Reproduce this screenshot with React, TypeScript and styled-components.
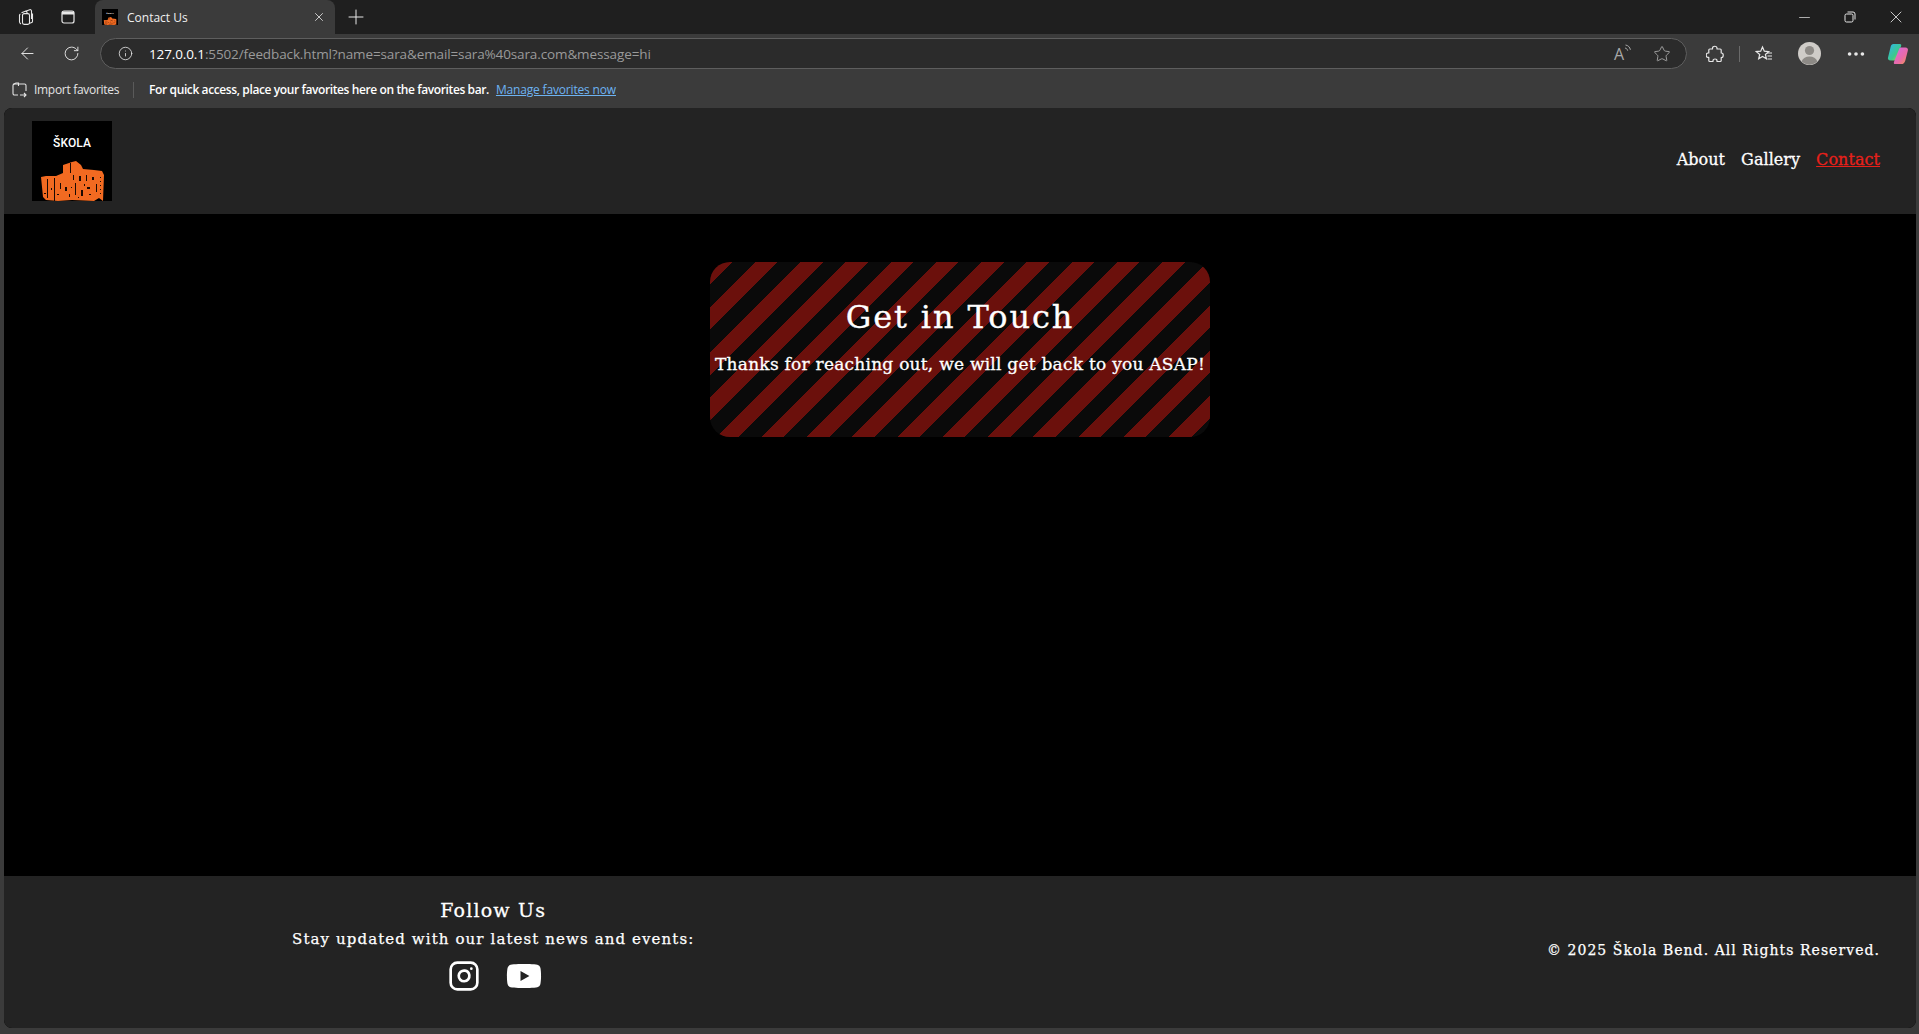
import React from "react";
import styled, { createGlobalStyle } from "styled-components";
import { ArrowLeft, RotateCw, Info, Plus, X, Minus, Star, MoreHorizontal, Instagram } from "lucide-react";
import { FaYoutube } from "react-icons/fa";

const Global = createGlobalStyle`
  html, body { margin: 0; padding: 0; background: #3b3b3b; }
  body { width: 1919px; height: 1034px; overflow: hidden; font-family: "Open Sans", "Noto Sans", sans-serif; }
  * { box-sizing: border-box; }
`;

const typewriter = `"DejaVu Serif", "Liberation Mono", serif`;

const Window = styled.div`
  width: 1919px;
  height: 1034px;
  display: flex;
  flex-direction: column;
  background: #3b3b3b;
`;
const TabStrip = styled.div`
  height: 34px;
  background: #1f1f1f;
  display: flex;
  align-items: center;
  color: #e8e8e8;
`;
const StripIcons = styled.div`
  width: 95px;
  display: flex;
  align-items: center;
  padding-left: 17px;
  gap: 25px;
`;
const Tab = styled.div`
  width: 240px;
  height: 34px;
  background: #3b3b3b;
  border-radius: 8px 8px 0 0;
  display: flex;
  align-items: center;
  padding: 0 9px 0 7px;
  gap: 9px;
`;
const TabTitle = styled.span`
  flex: 1;
  font-size: 12px;
  color: #f0f0f0;
`;
const NewTab = styled.div`
  width: 34px;
  margin-left: 4px;
  display: flex;
  justify-content: center;
`;
const WindowButtons = styled.div`
  margin-left: auto;
  display: flex;
  align-items: center;
`;
const WindowButton = styled.div`
  width: 46px;
  display: flex;
  justify-content: center;
`;
const Toolbar = styled.div`
  height: 38px;
  display: flex;
  align-items: center;
  padding: 1px 0 0 18px;
  color: #e8e8e8;
`;
const NavButtons = styled.div`
  width: 82px;
  display: flex;
  align-items: center;
  gap: 26px;
`;
const Omnibox = styled.div`
  width: 1587px;
  height: 31px;
  border: 1px solid #5e5e5e;
  background: #2b2b2b;
  border-radius: 16px;
  display: flex;
  align-items: center;
  padding: 0 15px 0 17px;
`;
const Url = styled.div`
  margin-left: 16px;
  flex: 1;
  font-size: 13.5px;
  letter-spacing: -0.12px;
  color: #9a9a9a;
  white-space: nowrap;
`;
const Host = styled.span`
  color: #ffffff;
`;
const OmniActions = styled.div`
  display: flex;
  align-items: center;
  gap: 21px;
  color: #a8a8a8;
`;
const ReadAloudBox = styled.div`
  display: flex;
  align-items: flex-start;
`;
const ReadAloudLetter = styled.span`
  font-size: 16px;
  line-height: 20px;
  margin-top: 1px;
`;
const ToolIcons = styled.div`
  flex: 1;
  display: flex;
  align-items: center;
  padding-left: 19px;
`;
const ToolDivider = styled.div`
  width: 1px;
  height: 16px;
  background: #6a6a6a;
  margin: 0 15px;
`;
const Avatar = styled.div`
  margin-left: 25px;
  display: flex;
`;
const More = styled.div`
  margin-left: 24px;
  display: flex;
`;
const Copilot = styled.div`
  margin-left: 20px;
  display: flex;
`;
const FavBar = styled.div`
  height: 36px;
  display: flex;
  align-items: center;
  padding: 0 0 1px 11px;
  font-size: 12px;
  color: #e4e4e4;
`;
const FavImport = styled.div`
  display: flex;
  align-items: center;
  gap: 6px;
  letter-spacing: -0.3px;
`;
const FavDivider = styled.div`
  width: 1px;
  height: 16px;
  background: #5a5a5a;
  margin: 0 15px 0 14px;
`;
const FavText = styled.span`
  color: #ffffff;
  font-weight: 600;
  letter-spacing: -0.39px;
`;
const FavLink = styled.a`
  margin-left: 7px;
  color: #6db3f2;
  text-decoration: underline;
  letter-spacing: -0.17px;
`;
const Page = styled.div`
  width: 1912px;
  height: 920px;
  margin-left: 4px;
  border-radius: 8px;
  overflow: hidden;
  display: flex;
  flex-direction: column;
  background: #000;
  font-family: ${typewriter};
  color: #fff;
`;
const Header = styled.header`
  height: 106px;
  flex: none;
  background: #232323;
  display: flex;
  align-items: center;
  justify-content: space-between;
  padding: 0 36px 0 28px;
`;
const Nav = styled.nav`
  display: flex;
  gap: 16px;
  margin-top: -3px;
`;
const NavLink = styled.a<{ $active?: boolean }>`
  font-size: 16px;
  letter-spacing: 0.05px;
  -webkit-text-stroke: 0.3px currentColor;
  color: ${(p) => (p.$active ? "#e8201a" : "#ffffff")};
  text-decoration: ${(p) => (p.$active ? "underline" : "none")};
`;
const Main = styled.main`
  flex: 1;
  display: flex;
  flex-direction: column;
  align-items: center;
  padding-top: 48px;
`;
const Card = styled.section`
  width: 500px;
  height: 175px;
  border-radius: 20px;
  background: repeating-linear-gradient(135deg, #6b100c 0 16px, #0a0a0a 16px 32px);
  display: flex;
  flex-direction: column;
  align-items: center;
  padding-top: 35px;
`;
const Title = styled.h1`
  margin: 0;
  font-size: 32px;
  line-height: 40px;
  font-weight: 400;
  letter-spacing: 1.9px;
  -webkit-text-stroke: 0.3px #fff;
`;
const Message = styled.p`
  margin: 15px 0 0;
  font-size: 17px;
  line-height: 24px;
  font-weight: 400;
  letter-spacing: 0.24px;
  -webkit-text-stroke: 0.3px #fff;
  white-space: nowrap;
`;
const Footer = styled.footer`
  height: 152px;
  flex: none;
  background: #232323;
  display: flex;
  align-items: center;
  justify-content: space-between;
  padding: 0 36px 0 288px;
`;
const FollowCol = styled.div`
  display: flex;
  flex-direction: column;
  align-items: center;
  margin-top: -13px;
`;
const FollowTitle = styled.h3`
  margin: 0;
  font-size: 19px;
  line-height: 24px;
  font-weight: 400;
  letter-spacing: 1.2px;
  -webkit-text-stroke: 0.3px #fff;
`;
const FollowText = styled.p`
  margin: 7px 0 0;
  font-size: 15px;
  line-height: 20px;
  letter-spacing: 1.1px;
  -webkit-text-stroke: 0.25px #fff;
`;
const Socials = styled.div`
  margin: 9px 0 0 3px;
  display: flex;
  align-items: center;
  gap: 26px;
`;
const Copy = styled.p`
  margin: -4px 0 0;
  font-size: 14px;
  letter-spacing: 1.05px;
  -webkit-text-stroke: 0.25px #fff;
`;

const Collections = () => (
  <svg width="18" height="18" viewBox="0 0 18 18" fill="none" stroke="currentColor" strokeWidth="1.1">
    <path d="M8.500 3.200 12.800 1.700a1.300 1.300 0 0 1 1.700 1.200v8" />
    <path d="M4.500 4.800 8.400 3.300a1.300 1.300 0 0 1 1.600 1.200v1" />
    <path d="M2.500 7.200c0-.7.300-1.100.9-1.300" />
    <path d="M2.500 7v6.800c0 1 .6 1.700 1.500 2.100" />
    <path d="M15.500 5.500v7.700c0 .6-.3 1.100-.8 1.300l-2.700 1.100" />
    <rect x="5.500" y="5.600" width="7" height="10.800" rx="1.600" />
  </svg>
);
const TabsIcon = () => (
  <svg width="16" height="16" viewBox="0 0 16 16" fill="none" stroke="currentColor" strokeWidth="1.2">
    <rect x="2" y="2" width="12" height="12" rx="2" />
    <path d="M2 4h12" strokeWidth="3" />
  </svg>
);
const Restore = () => (
  <svg width="12" height="12" viewBox="0 0 12 12" fill="none" stroke="currentColor" strokeWidth="1">
    <rect x="1" y="3" width="8" height="8" rx="1.500" />
    <path d="M3.500 1h5.500a2 2 0 0 1 2 2v5.500" />
  </svg>
);
const ReadAloudWaves = () => (
  <svg width="8" height="12" viewBox="0 0 8 12" fill="none" stroke="currentColor" strokeWidth="1">
    <path d="M1 5c1.500.3 2.300 1.100 2.700 2.700M1.500 2c2.700.4 4.400 2.200 4.900 4.800" />
  </svg>
);
const PuzzlePiece = () => (
  <svg width="18" height="18" viewBox="0 0 18 18" fill="none" stroke="currentColor" strokeWidth="1.200" strokeLinejoin="round">
    <path d="M6.500 3.200c0-2.600 4.500-2.600 4.500 0v.8h3.200c.6 0 1 .4 1 1v3h.3c2.300 0 2.300 4.500 0 4.500h-.3v3c0 .6-.4 1-1 1H11v-.8c0-2.300-4-2.300-4 0v.8H3.800c-.6 0-1-.4-1-1v-3.200H2c-2.400 0-2.400-4.300 0-4.300h.8V5c0-.6.4-1 1-1h2.700z" />
  </svg>
);
const FavStar = () => (
  <svg width="18" height="18" viewBox="0 0 18 18" fill="none" stroke="currentColor" strokeWidth="1.200">
    <path d="M7.500 2 9.300 6.200l4.400.4-3.300 2.900 1 4.300-3.900-2.300-3.800 2.300 1-4.300L1.300 6.600l4.400-.4z" />
    <path d="M12 8h5M12.500 11h4.500M12.500 14h4.500" />
  </svg>
);
const AvatarIcon = () => (
  <svg width="23" height="23" viewBox="0 0 23 23">
    <circle cx="11.500" cy="11.500" r="11.500" fill="#cfccc8" />
    <circle cx="11.500" cy="8.500" r="4.600" fill="#8d8a86" />
    <path d="M3.600 19.500c1.200-3.400 4.300-5 7.900-5s6.700 1.600 7.900 5a11.500 11.500 0 0 1-15.800 0z" fill="#8d8a86" />
  </svg>
);
const CopilotIcon = () => (
  <svg width="22" height="22" viewBox="0 0 24 24">
    <defs>
      <linearGradient id="cpA" x1="0" y1="0" x2="1" y2="1">
        <stop offset="0" stopColor="#2fb6f0" />
        <stop offset="0.6" stopColor="#3cc98a" />
        <stop offset="1" stopColor="#c6d83a" />
      </linearGradient>
      <linearGradient id="cpB" x1="0" y1="0" x2="1" y2="1">
        <stop offset="0" stopColor="#d36be6" />
        <stop offset="0.6" stopColor="#e86aa8" />
        <stop offset="1" stopColor="#f29a4a" />
      </linearGradient>
    </defs>
    <path d="M7 1h7c1.700 0 1.900 1 1.300 2.500L11 17c-.5 1.400-1.500 2-2.700 2H4C1.500 19 .5 17.500 1.200 15.500L4 4C4.500 2 5.500 1 7 1z" fill="url(#cpA)" />
    <path d="M16 5h4c2.300 0 3.400 1.500 2.700 3.500L20 19c-.7 2.400-2.200 4-4.500 4H9c-1.500 0-1.900-1-1.300-2.500L13 7c.5-1.300 1.500-2 3-2z" fill="url(#cpB)" />
  </svg>
);
const FavImportIcon = () => (
  <svg width="17" height="17" viewBox="0 0 17 17" fill="none" stroke="currentColor" strokeWidth="1.100">
    <path d="M7 14H3.500A1.500 1.500 0 0 1 2 12.500V4.500A1.500 1.500 0 0 1 3.500 3H13.500A1.500 1.500 0 0 1 15 4.500V10" />
    <path d="M2 3.500 5 2h2.500v3M9 14h6M13 12l2 2-2 2" />
  </svg>
);
const speckle =
  "M15 58h1v19h-1zM22 57h1v23h-1zM38 42h1v10h-1zM43 62h1v12h-1zM41 54h1v5h-1zM47 55h2v5h-2zM33 66h2v4h-2zM54 54h1v6h-1zM60 56h2v3h-2zM55 66h3v2h-3zM64 63h1v8h-1zM28 62h1v6h-1zM49 69h2v6h-2zM12 72h2v1h-2zM19 67h1v2h-1zM25 73h2v1h-2zM52 63h1v2h-1zM68 56h1v1h-1zM68 60h1v1h-1zM68 64h1v1h-1zM68 68h1v1h-1zM68 72h1v1h-1zM39 66h1v1h-1zM37 73h1v3h-1zM46 76h1v1h-1zM57 73h2v1h-2z";
const LogoMark = ({ size, text }: { size: number; text?: boolean }) => (
  <svg width={size} height={size} viewBox="0 0 80 80">
    <rect width="80" height="80" fill="#000" />
    {text && (
      <text x="40" y="26" textAnchor="middle" fontFamily="Roboto, sans-serif" fontWeight="500" fontSize="12" fill="#fff" textLength="38" lengthAdjust="spacing">
        ŠKOLA
      </text>
    )}
    <path
      d="M9 56 14 55 24 55 31 52 31 44 40 41 44 40 49 44 51 48 62 49 70 50 72 54 71 80 67 77 62 80 40 79 26 80 14 79 11 76z"
      fill="#f26a21"
    />
    <path d={speckle} fill="#1a0a03" />
  </svg>
);

export default function App() {
  return (
    <Window>
      <Global />
      <TabStrip>
        <StripIcons>
          <Collections />
          <TabsIcon />
        </StripIcons>
        <Tab>
          <LogoMark size={16} text />
          <TabTitle>Contact Us</TabTitle>
          <X size={14} strokeWidth={1.4} />
        </Tab>
        <NewTab>
          <Plus size={24} strokeWidth={1} />
        </NewTab>
        <WindowButtons>
          <WindowButton>
            <Minus size={17} strokeWidth={1} />
          </WindowButton>
          <WindowButton>
            <Restore />
          </WindowButton>
          <WindowButton>
            <X size={20} strokeWidth={1} />
          </WindowButton>
        </WindowButtons>
      </TabStrip>
      <Toolbar>
        <NavButtons>
          <ArrowLeft size={19} strokeWidth={1.2} />
          <RotateCw size={17} strokeWidth={1.3} />
        </NavButtons>
        <Omnibox>
          <Info size={15} strokeWidth={1.3} />
          <Url>
            <Host>127.0.0.1</Host>:5502/feedback.html?name=sara&amp;email=sara%40sara.com&amp;message=hi
          </Url>
          <OmniActions>
            <ReadAloudBox>
              <ReadAloudLetter>A</ReadAloudLetter>
              <ReadAloudWaves />
            </ReadAloudBox>
            <Star size={18} strokeWidth={1.2} />
          </OmniActions>
        </Omnibox>
        <ToolIcons>
          <PuzzlePiece />
          <ToolDivider />
          <FavStar />
          <Avatar>
            <AvatarIcon />
          </Avatar>
          <More>
            <MoreHorizontal size={22} strokeWidth={2} />
          </More>
          <Copilot>
            <CopilotIcon />
          </Copilot>
        </ToolIcons>
      </Toolbar>
      <FavBar>
        <FavImport>
          <FavImportIcon />
          Import favorites
        </FavImport>
        <FavDivider />
        <FavText>For quick access, place your favorites here on the favorites bar.</FavText>
        <FavLink>Manage favorites now</FavLink>
      </FavBar>
      <Page>
        <Header>
          <LogoMark size={80} text />
          <Nav>
            <NavLink>About</NavLink>
            <NavLink>Gallery</NavLink>
            <NavLink $active>Contact</NavLink>
          </Nav>
        </Header>
        <Main>
          <Card>
            <Title>Get in Touch</Title>
            <Message>Thanks for reaching out, we will get back to you ASAP!</Message>
          </Card>
        </Main>
        <Footer>
          <FollowCol>
            <FollowTitle>Follow Us</FollowTitle>
            <FollowText>Stay updated with our latest news and events:</FollowText>
            <Socials>
              <Instagram size={32} strokeWidth={2} />
              <FaYoutube size={36} />
            </Socials>
          </FollowCol>
          <Copy>© 2025 Škola Bend. All Rights Reserved.</Copy>
        </Footer>
      </Page>
    </Window>
  );
}
